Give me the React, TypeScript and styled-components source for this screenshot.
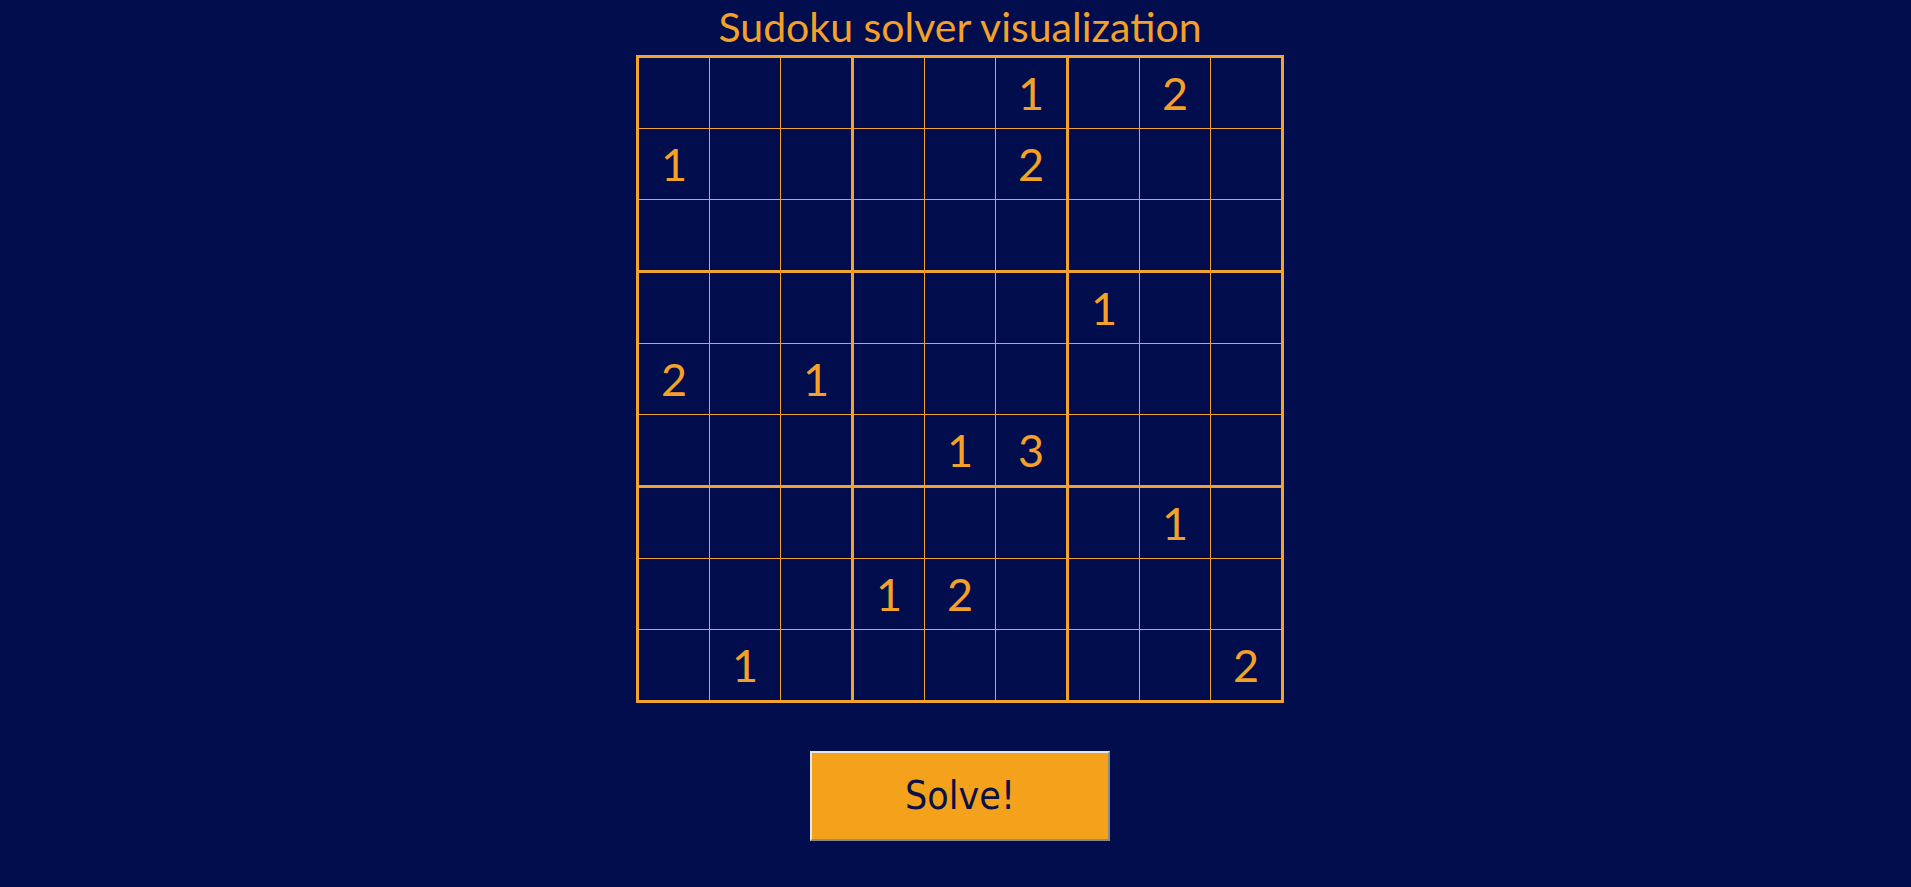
import React from "react";
import styled, { createGlobalStyle } from "styled-components";

const GlobalStyle = createGlobalStyle`
  html, body {
    margin: 0;
    padding: 0;
    background: #010d4c;
  }
  body {
    font-family: "Lato", "Noto Sans", sans-serif;
  }
`;

const Page = styled.main`
  min-height: 887px;
  box-sizing: border-box;
  padding: 4px 0 0 9px;
  display: flex;
  flex-direction: column;
  align-items: center;
  background: #010d4c;
`;

const Title = styled.h1`
  margin: 0 0 5px;
  font-family: "Lato", "Noto Sans", sans-serif;
  font-weight: 400;
  font-size: 41px;
  line-height: 46px;
  color: #f3a128;
`;

const Board = styled.div`
  display: grid;
  grid-template-columns: repeat(9, auto);
  border: 3px solid #f2a22e;
`;

const Cell = styled.div<{ $right: number; $bottom: number }>`
  width: 70px;
  height: 70px;
  display: flex;
  align-items: center;
  justify-content: center;
  border-right: ${(p) => p.$right}px solid #f2a22e;
  border-bottom: ${(p) => p.$bottom}px solid #f2a22e;
  font-family: "Lato", "Noto Sans", sans-serif;
  font-size: 45px;
  line-height: 1;
  color: #f3a128;
`;

const SolveButton = styled.button`
  margin-top: 48px;
  width: 300px;
  height: 90px;
  box-sizing: border-box;
  background: #f4a11c;
  border: 2px solid;
  border-color: #e6e6e6 #8a8a8a #8a8a8a #e6e6e6;
  font-family: "DejaVu Sans Condensed", "DejaVu Sans", sans-serif;
  font-stretch: condensed;
  font-size: 39px;
  color: #0b1145;
  padding: 0 0 2px;
  cursor: pointer;
`;

const board: (number | null)[][] = [
  [null, null, null, null, null, 1, null, 2, null],
  [1, null, null, null, null, 2, null, null, null],
  [null, null, null, null, null, null, null, null, null],
  [null, null, null, null, null, null, 1, null, null],
  [2, null, 1, null, null, null, null, null, null],
  [null, null, null, null, 1, 3, null, null, null],
  [null, null, null, null, null, null, null, 1, null],
  [null, null, null, 1, 2, null, null, null, null],
  [null, 1, null, null, null, null, null, null, 2],
];

const lineAfter = (i: number) => (i === 8 ? 0 : i % 3 === 2 ? 3 : 1);

export default function App() {
  return (
    <>
      <GlobalStyle />
      <Page>
        <Title>Sudoku solver visualization</Title>
        <Board>
          {board.map((row, r) =>
            row.map((v, c) => (
              <Cell key={`${r}-${c}`} $right={lineAfter(c)} $bottom={lineAfter(r)}>
                {v ?? ""}
              </Cell>
            ))
          )}
        </Board>
        <SolveButton type="button">Solve!</SolveButton>
      </Page>
    </>
  );
}
